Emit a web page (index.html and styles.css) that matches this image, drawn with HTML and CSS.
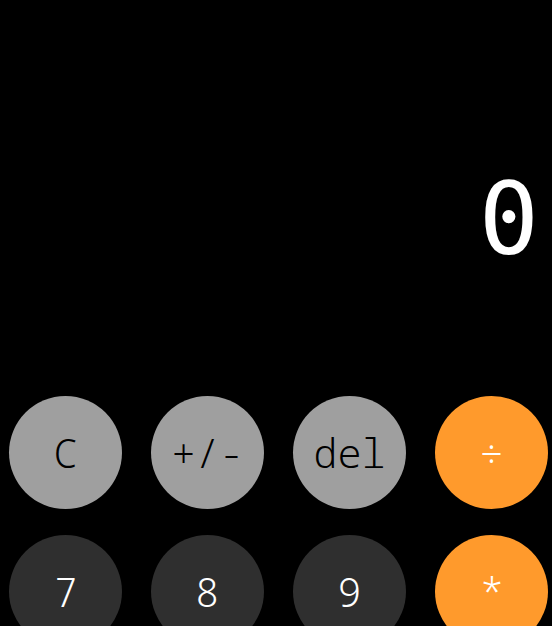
FILE: index.html
```html
<!DOCTYPE html>
<html>
<head>
<meta charset="utf-8">
<link rel="stylesheet" href="styles.css">
</head>
<body>
<div class="calc">
  <div class="display">0</div>
  <div class="keys">
    <button class="key fn">C</button>
    <button class="key fn">+/-</button>
    <button class="key fn">del</button>
    <button class="key op">÷</button>
    <button class="key num">7</button>
    <button class="key num">8</button>
    <button class="key num">9</button>
    <button class="key op">*</button>
  </div>
</div>
</body>
</html>
```
FILE: styles.css
```css
html, body {
  margin: 0;
  padding: 0;
  background: #000;
  font-family: "DejaVu Sans Mono", monospace;
}
.calc {
  width: 552px;
  height: 626px;
  overflow: hidden;
  display: flex;
  flex-direction: column;
}
.display {
  flex-shrink: 0;
  height: 396px;
  box-sizing: border-box;
  padding: 160px 13px 0 0;
  text-align: right;
  color: #fff;
  font-size: 100px;
  line-height: 120px;
}
.keys {
  flex-shrink: 0;
  display: grid;
  grid-template-columns: repeat(4, 113px);
  grid-auto-rows: 113px;
  column-gap: 29px;
  row-gap: 26px;
  padding-left: 9px;
}
.key {
  width: 113px;
  height: 113px;
  border: none;
  border-radius: 50%;
  padding: 0;
  font-family: "Noto Sans Mono", monospace;
  font-size: 40px;
  font-weight: 350;
}
.fn {
  background: #9f9f9f;
  color: #000;
}
.op {
  background: #ff9a2c;
  color: #fff;
}
.num {
  background: #2f2f2f;
  color: #fff;
}
```
